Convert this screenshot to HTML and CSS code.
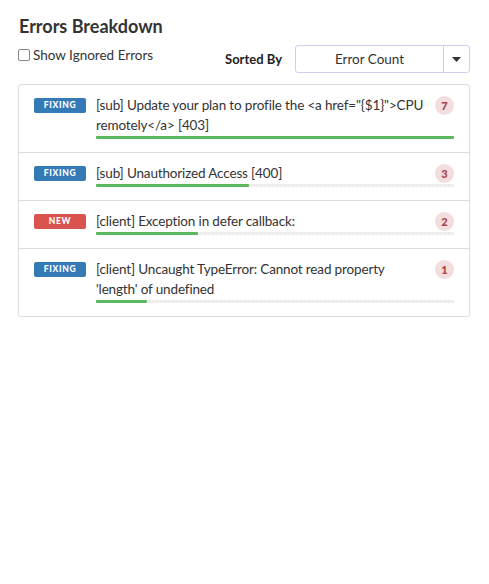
FILE: index.html
```html
<!DOCTYPE html>
<html>
<head>
<meta charset="utf-8">
<link rel="stylesheet" href="styles.css">
</head>
<body>
<div class="panel">
  <h2 class="title">Errors Breakdown</h2>
  <div class="toolbar">
    <label class="ignored"><span class="checkbox"></span>Show Ignored Errors</label>
    <div class="sort">
      <span class="sort-label">Sorted By</span>
      <div class="select">
        <span class="select-value">Error Count</span>
        <span class="select-caret"><svg width="9" height="5" viewBox="0 0 9 5"><path d="M0 0h9L4.5 5z" fill="#333"/></svg></span>
      </div>
    </div>
  </div>
  <ul class="errors">
    <li class="error">
      <span class="status fixing">FIXING</span>
      <div class="body">
        <div class="line">
          <span class="msg">[sub] Update your plan to profile the &lt;a href="{$1}"&gt;CPU remotely&lt;/a&gt; [403]</span>
          <span class="count">7</span>
        </div>
        <div class="bar"><div class="fill" style="width:100%"></div></div>
      </div>
    </li>
    <li class="error">
      <span class="status fixing">FIXING</span>
      <div class="body">
        <div class="line">
          <span class="msg">[sub] Unauthorized Access [400]</span>
          <span class="count">3</span>
        </div>
        <div class="bar"><div class="fill" style="width:42.86%"></div></div>
      </div>
    </li>
    <li class="error">
      <span class="status new">NEW</span>
      <div class="body">
        <div class="line">
          <span class="msg">[client] Exception in defer callback:</span>
          <span class="count">2</span>
        </div>
        <div class="bar"><div class="fill" style="width:28.57%"></div></div>
      </div>
    </li>
    <li class="error">
      <span class="status fixing">FIXING</span>
      <div class="body">
        <div class="line">
          <span class="msg">[client] Uncaught TypeError: Cannot read property 'length' of undefined</span>
          <span class="count">1</span>
        </div>
        <div class="bar"><div class="fill" style="width:14.29%"></div></div>
      </div>
    </li>
  </ul>
</div>
</body>
</html>
```

FILE: styles.css
```css
* { box-sizing: border-box; }
body {
  margin: 0;
  background: #fff;
  font-family: Lato, "Noto Sans", sans-serif;
  color: #333;
}
.panel {
  padding: 14px 19px 0 18px;
}
.title {
  margin: 0 0 0 1px;
  font-size: 18px;
  line-height: 24px;
  font-weight: 700;
  color: #333;
}
.toolbar {
  display: flex;
  justify-content: space-between;
  align-items: center;
  margin-top: 7px;
}
.ignored {
  display: flex;
  align-items: center;
  font-size: 13.5px;
  color: #333;
  align-self: flex-start;
  margin-top: 2px;
}
.checkbox {
  width: 12px;
  height: 12px;
  border: 1px solid #8a8a8a;
  border-radius: 2px;
  margin-right: 3px;
  background: #fff;
}
.sort {
  display: flex;
  align-items: center;
}
.sort-label {
  font-weight: 700;
  font-size: 13px;
  margin-right: 13px;
  color: #222;
}
.select {
  display: flex;
  width: 175px;
  height: 28px;
  border: 1px solid #d3cef0;
  border-radius: 3px;
}
.select-value {
  flex: 1;
  display: flex;
  align-items: center;
  justify-content: center;
  font-size: 13.5px;
  color: #333;
  border-right: 1px solid #d3cef0;
}
.select-caret {
  width: 25px;
  display: flex;
  align-items: center;
  justify-content: center;
}
.errors {
  list-style: none;
  margin: 11px 0 0;
  padding: 0;
  border: 1px solid #ddd;
  border-radius: 3px;
}
.error {
  display: flex;
  align-items: flex-start;
  padding: 10px 15px 13px 15px;
  border-top: 1px solid #ddd;
}
.error:first-child { border-top: none; }
.status {
  flex: none;
  width: 52px;
  height: 15px;
  margin-top: 3px;
  margin-right: 10px;
  border-radius: 2px;
  color: #fff;
  font-size: 8.5px;
  font-weight: 900;
  letter-spacing: 0.7px;
  line-height: 15px;
  text-align: center;
}
.fixing { background: #337ab7; }
.new { background: #d9534f; }
.body {
  flex: 1;
  min-width: 0;
}
.line {
  display: flex;
  align-items: flex-start;
}
.msg {
  flex: 1;
  font-size: 13.5px;
  letter-spacing: -0.15px;
  line-height: 20px;
  color: #333;
  padding-right: 8px;
}
.count {
  flex: none;
  width: 19px;
  height: 19px;
  margin-top: 1px;
  border-radius: 50%;
  background: #f2dede;
  color: #a94442;
  font-size: 11px;
  font-weight: 900;
  line-height: 19px;
  text-align: center;
}
.bar {
  height: 3px;
  margin-top: 1px;
  background: repeating-linear-gradient(90deg, #ebebeb 0 2px, #f5eeee 2px 4px);
  border-radius: 1px;
}
.fill {
  height: 3px;
  background: #5cb85c;
  border-radius: 1px;
}
```
